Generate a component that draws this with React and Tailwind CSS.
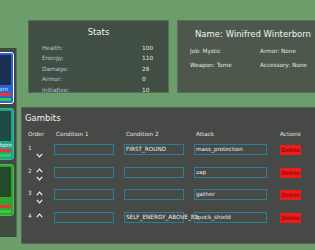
const cards = [
  { name: "Winifred Winterborn", border: "border-white", bg: "bg-[#2b63d0]", img: "bg-[#1c2f55]", text: "text-[#d8e4ff]" },
  { name: "Gwendolyn Blackthorn", border: "border-[#35b59c]", bg: "bg-[#27a088]", img: "bg-[#1f4a44]", text: "text-[#e8fff8]" },
  { name: "Bram Oak", border: "border-[#45c045]", bg: "bg-[#33a333]", img: "bg-[#234a2a]", text: "text-[#e8ffe8]" },
];

const stats = [
  ["Health:", 100],
  ["Energy:", 110],
  ["Damage:", 26],
  ["Armor:", 0],
  ["Initiative:", 10],
];

const gambits = [
  { cond1: "", cond2: "FIRST_ROUND", attack: "mass_protection" },
  { cond1: "", cond2: "", attack: "zap" },
  { cond1: "", cond2: "", attack: "gather" },
  { cond1: "", cond2: "SELF_ENERGY_ABOVE_80", attack: "quick_shield" },
];

function Chevron({ up }) {
  return (
    <svg width="7" height="5" viewBox="0 0 7 5" fill="none">
      <path
        d={up ? "M0.8 4.2 L3.5 1.2 L6.2 4.2" : "M0.8 0.8 L3.5 3.8 L6.2 0.8"}
        stroke="#f2f2f2"
        strokeWidth="1.2"
      />
    </svg>
  );
}

function Field({ value, width }) {
  return (
    <div className={`${width} h-[11px] border border-[#2c7d9c] text-[5.7px] leading-[9px] pl-[1px] text-[#ececec] whitespace-nowrap`}>
      {value}
    </div>
  );
}

export default function App() {
  return (
    <div className="w-[315px] h-[250px] overflow-hidden bg-[#6b9e6b] flex font-['DejaVu_Sans',sans-serif]">
      {/* party list, mostly scrolled off to the left */}
      <div className="w-[17px] shrink-0 mt-[48px] h-[189px] bg-[#3f4a40] border-r border-[#5b6b5b] overflow-hidden flex flex-col items-end pr-[2px] pt-[4px] gap-[4px]">
        {cards.map((c) => (
          <div key={c.name} className={`w-[69px] h-[52px] shrink-0 rounded-[3px] border ${c.border} ${c.bg} p-[2px] flex flex-col`}>
            <div className={`h-[32px] ${c.img}`} />
            <div className={`text-[5.7px] leading-[6px] mt-[1px] text-center whitespace-nowrap ${c.text}`}>{c.name}</div>
            <div className="h-[3px] mt-[1px] bg-[#e53535]" />
            <div className="h-[3px] mt-[2px] bg-[#35cc45]" />
          </div>
        ))}
      </div>

      <div className="flex-1 ml-[4px] flex flex-col min-w-0">
        <div className="flex mt-[20px] h-[73px] gap-[8px] pl-[7px]">
          <div className="w-[141px] shrink-0 bg-[#404e44] border border-[#5c6b5e] overflow-hidden">
            <div className="text-[8.5px] leading-[12px] text-center text-[#f2f2f2] pt-[5px]">Stats</div>
            <div className="grid grid-cols-[100px_1fr] pl-[13px] mt-[4.75px] text-[5.8px] leading-[10.5px]">
              {stats.map(([label, value]) => (
                <div key={label} className="contents">
                  <span className="text-[#b9c2d3]">{label}</span>
                  <span className="text-[#ece8d5]">{value}</span>
                </div>
              ))}
            </div>
          </div>

          <div className="w-[152px] shrink-0 bg-[#4d574c] border border-[#5d6a5c]">
            <div className="text-[8.5px] leading-[12px] text-center text-[#f2f2f2] pt-[7px] whitespace-nowrap">Name: Winifred Winterborn</div>
            <div className="grid grid-cols-[70px_1fr] pl-[12px] mt-[4.4px] text-[5.7px] leading-[14px] text-[#e2e6e2]">
              <span>Job: Mystic</span>
              <span>Armor: None</span>
              <span>Weapon: Tome</span>
              <span>Accessory: None</span>
            </div>
          </div>
        </div>

        <div className="mt-[14px] h-[137px] w-[320px] shrink-0 bg-[#474947] border border-[#5a625a]">
          <div className="text-[8.5px] leading-[12px] text-[#f2f2f2] pl-[3px] pt-[3.7px]">Gambits</div>
          <div className="pl-[6px] mt-[6px]">
            <div className="grid grid-cols-[26px_70px_70px_86px_auto] text-[5.7px] leading-[8px] text-[#e2e2e2]">
              <span>Order</span>
              <span className="pl-[2px]">Condition 1</span>
              <span className="pl-[2px]">Condition 2</span>
              <span className="pl-[2px]">Attack</span>
              <span>Actions</span>
            </div>
            <div className="mt-[6.3px]">
              {gambits.map((g, i) => (
                <div key={i} className="grid grid-cols-[26px_70px_70px_86px_auto] h-[22.67px] items-start">
                  <div className="flex items-start">
                    <span className="w-[7px] text-[5.7px] leading-[8px] text-[#ececec]">{i + 1}</span>
                    <div className="flex flex-col">
                      <div className={`h-[8px] w-[8px] flex items-center justify-center ${i === 0 ? "invisible" : ""}`}>
                        <Chevron up />
                      </div>
                      {i < gambits.length - 1 && (
                        <div className="h-[8px] w-[8px] flex items-center justify-center">
                          <Chevron />
                        </div>
                      )}
                    </div>
                  </div>
                  <Field value={g.cond1} width="w-[60px]" />
                  <Field value={g.cond2} width="w-[60px]" />
                  <Field value={g.attack} width="w-[73px]" />
                  <button className="w-[21px] h-[10px] mt-[1px] bg-[#ee1b1b] text-[#6e0000] text-[5.7px] leading-[10px] text-center">
                    Delete
                  </button>
                </div>
              ))}
            </div>
          </div>
        </div>
      </div>
    </div>
  );
}
